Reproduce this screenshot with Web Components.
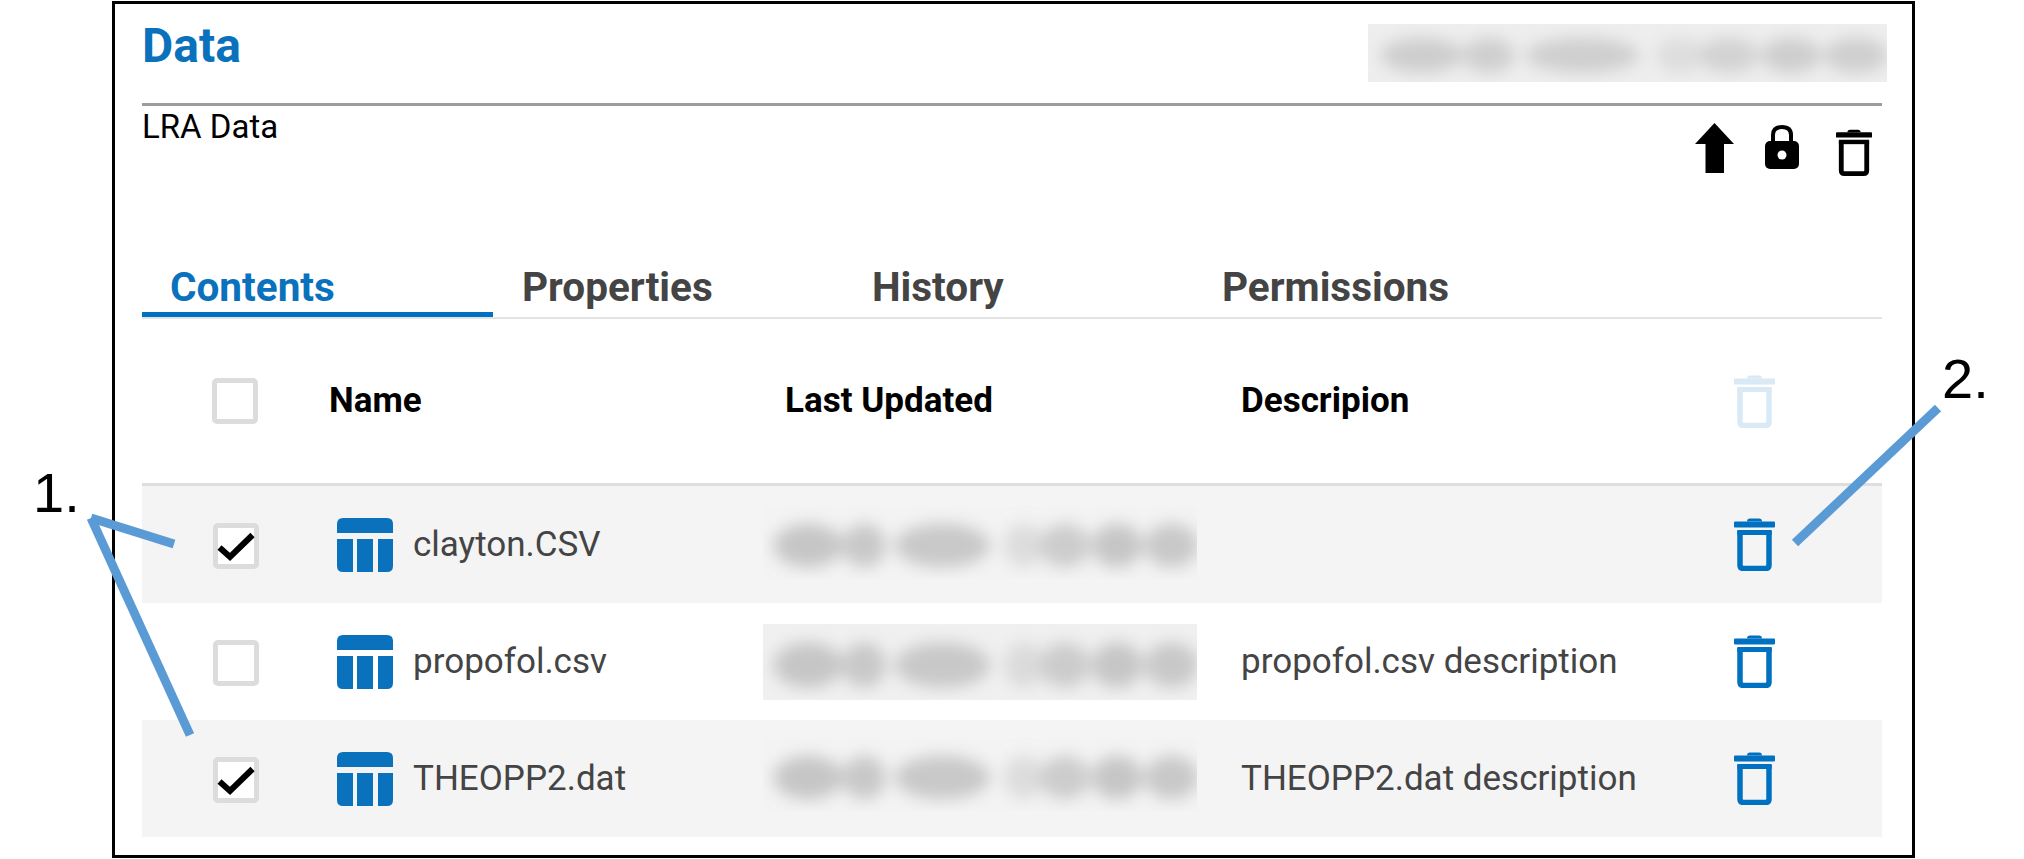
<!DOCTYPE html>
<html><head><meta charset="utf-8"><title>Data</title>
<style>html,body{margin:0;padding:0;background:#fff}</style></head>
<body>
<x-page>
  <x-panel>
    <x-header slot="header" title-text="Data" sub="LRA Data"></x-header>
    <x-tabs slot="tabs">
      <x-tab active>Contents</x-tab><x-tab>Properties</x-tab><x-tab>History</x-tab><x-tab>Permissions</x-tab>
    </x-tabs>
    <x-table-head slot="table"></x-table-head>
    <x-row slot="table" shaded checked blur-h="73" blur-top="20"><span slot="name">clayton.CSV</span></x-row>
    <x-row slot="table" blur-h="76" blur-top="21" blur-box><span slot="name">propofol.csv</span><span slot="desc">propofol.csv description</span></x-row>
    <x-row slot="table" shaded checked blur-h="73" blur-top="18"><span slot="name">THEOPP2.dat</span><span slot="desc">THEOPP2.dat description</span></x-row>
  </x-panel>
</x-page>
<script>
const FONT = 'Roboto, "Liberation Sans", sans-serif';
class Base extends HTMLElement {
  render(html){ const r=this.shadowRoot||this.attachShadow({mode:'open'}); r.innerHTML=html; }
}
customElements.define('x-trash', class extends Base {
  connectedCallback(){
    const c=this.getAttribute('color')||'#0070c0', w=this.getAttribute('w')||41, h=this.getAttribute('h')||53;
    this.render(`<style>:host{display:block;width:${w}px;height:${h}px;line-height:0}</style>
    <svg width="${w}" height="${h}" viewBox="0 0 41 53" fill="none">
      <path d="M13 3.5Q13 0.5 16 0.5H25Q28 0.5 28 3.5Z" fill="${c}"/>
      <rect x="0" y="3.5" width="41" height="6" rx="1" fill="${c}"/>
      <path d="M6 13V47Q6 50.5 9.5 50.5H31.500Q35 50.500 35 47V13" stroke="${c}" stroke-width="5.500"/>
      <rect x="3.300" y="12" width="34.400" height="5" fill="${c}"/>
    </svg>`);
  }
});
customElements.define('x-check', class extends Base {
  connectedCallback(){
    const on=this.hasAttribute('checked');
    this.render(`<style>:host{display:block;width:46px;height:46px;box-sizing:border-box;background:#fff;border:5px solid #dcdcdc;border-radius:5px}
    svg{display:block;margin:-5px}</style>
    ${on?`<svg width="46" height="46" viewBox="0 0 46 46" fill="none"><path d="M6.500 24.500L17 34L39.500 12" stroke="#000" stroke-width="6"/></svg>`:''}`);
  }
});
customElements.define('x-table-icon', class extends Base {
  connectedCallback(){
    this.render(`<style>:host{display:block;width:56px;height:54px;line-height:0}</style>
    <svg width="56" height="54" viewBox="0 0 56 54" fill="#0a72bd">
      <path d="M0 15V6Q0 0 6 0H50Q56 0 56 6V15Z"/>
      <path d="M0 21H16V54H6Q0 54 0 48Z"/>
      <rect x="20" y="21" width="16" height="33"/>
      <path d="M41 21H56V48Q56 54 50 54H41Z"/>
    </svg>`);
  }
});
const BLOBS=[[10.4,8,1],[23.300,5,.95],[41.300,11,.95],[60,4.500,.5],[69.500,5.800,.85],[81.500,5.800,1],[94,6.200,.95]];
customElements.define('x-blur', class extends Base {
  connectedCallback(){
    const w=+this.getAttribute('w'), h=+this.getAttribute('h'), bg=this.getAttribute('bg')||'transparent', col=this.getAttribute('col')||'#c6c6c6';
    const ell=BLOBS.map(([x,rx,o])=>`<ellipse cx="${x*w/100}" cy="${h*.54}" rx="${rx*w/100}" ry="${h*.3}" fill="${col}" opacity="${o}"/>`).join('');
    this.render(`<style>:host{display:block;width:${w}px;height:${h}px;background:${bg};overflow:hidden;line-height:0}</style>
    <svg width="${w}" height="${h}" viewBox="0 0 ${w} ${h}"><defs><filter id="b" x="-30%" y="-50%" width="160%" height="200%"><feGaussianBlur stdDeviation="8"/></filter></defs><g filter="url(#b)">${ell}</g></svg>`);
  }
});
customElements.define('x-header', class extends Base {
  connectedCallback(){
    this.render(`<style>
    :host{display:block;font-family:${FONT}}
    .top{display:flex;justify-content:space-between;height:99px;border-bottom:3px solid #9c9c9c}
    h1{margin:0;padding-top:16px;font:700 48px/52px ${FONT};color:#0a72bd}
    x-blur{margin:20px -5px 0 0}
    .sub{display:flex;justify-content:space-between;height:153px}
    .txt{font:400 33px/36px ${FONT};color:#000;padding-top:3px;height:36px}
    .icons{display:flex;align-items:flex-start;padding:17px 10px 0 0}
    .arrow{margin-right:31px;display:block}.lock{margin-right:37px;display:block}
    x-trash{margin-top:6px}
    </style>
    <div class="top"><h1>${this.getAttribute('title-text')}</h1><x-blur w="519" h="58" bg="#eeeeee" col="#cecece"></x-blur></div>
    <div class="sub"><div class="txt">${this.getAttribute('sub')}</div>
      <div class="icons">
        <svg class="arrow" width="39" height="53" viewBox="0 0 39 53"><path d="M19.500 0L39 21H29V50H10.500V21H0Z" fill="#000"/></svg>
        <svg class="lock" width="34" height="53" viewBox="0 0 34 53"><path d="M8 18V12Q8 4 17 4Q26 4 26 12V18" fill="none" stroke="#000" stroke-width="4"/><rect x="0" y="18" width="34" height="28" rx="5" fill="#000"/><circle cx="17" cy="32" r="4.500" fill="#fff"/></svg>
        <x-trash color="#000" w="36" h="47"></x-trash>
      </div></div>`);
  }
});
customElements.define('x-tabs', class extends Base {
  connectedCallback(){
    this.render(`<style>:host{display:flex;height:58px;border-bottom:2px solid #e4e4e4}</style><slot></slot>`);
  }
});
customElements.define('x-tab', class extends Base {
  connectedCallback(){
    const a=this.hasAttribute('active');
    this.render(`<style>:host{display:block;box-sizing:border-box;width:${a?351:350}px;height:58px;padding-left:${a?28:29}px;font:700 40.500px/57px ${FONT};color:${a?'#0a72bd':'#444'};${a?'border-bottom:5px solid #0070c0;':''}}</style><slot></slot>`);
  }
});
const GRID=`display:grid;grid-template-columns:187px 456px 456px 493px 148px;align-items:center;`;
customElements.define('x-table-head', class extends Base {
  connectedCallback(){
    this.render(`<style>:host{${GRID}height:164px;border-bottom:3px solid #dedede;font:700 35px/40px ${FONT};color:#000}
    x-check{margin-left:70px}</style>
    <x-check></x-check><div>Name</div><div>Last Updated</div><div>Descripion</div><x-trash color="#d9e9f6"></x-trash>`);
  }
});
customElements.define('x-row', class extends Base {
  connectedCallback(){
    const s=this.hasAttribute('shaded');
    this.render(`<style>:host{${GRID}height:117px;background:${s?'#f4f4f4':'#fff'};font:400 35px/40px ${FONT};color:#444}
    x-check{margin:2px 0 0 71px}
    .name{display:flex;align-items:center;gap:20px;margin-left:8px}
    x-blur{align-self:start;margin:${this.getAttribute('blur-top')}px 0 0 -22.5px}
    </style>
    <x-check ${this.hasAttribute('checked')?'checked':''}></x-check>
    <div class="name"><x-table-icon></x-table-icon><slot name="name"></slot></div>
    <x-blur w="434.5" h="${this.getAttribute('blur-h')}" bg="${this.hasAttribute('blur-box')?'#f0f0f0':'#f3f3f3'}"></x-blur>
    <div><slot name="desc"></slot></div>
    <x-trash></x-trash>`);
  }
});
customElements.define('x-panel', class extends Base {
  connectedCallback(){
    this.render(`<style>:host{display:block;box-sizing:border-box;width:1803px;height:857px;margin:1px 0 0 112px;border:3px solid #000;padding:0 30px 0 27px;background:#fff}</style>
    <slot name="header"></slot><slot name="tabs"></slot><slot name="table"></slot>`);
  }
});
customElements.define('x-page', class extends Base {
  connectedCallback(){
    this.render(`<style>:host{display:block;position:relative;width:2024px;height:859px;overflow:hidden}
    .lbl{position:absolute;font:400 56px/64px "Liberation Sans",Arial,sans-serif;color:#000}
    svg{position:absolute;left:0;top:0;pointer-events:none}</style>
    <slot></slot>
    <svg width="2024" height="859" viewBox="0 0 2024 859" fill="none" stroke="#5b9bd5" stroke-width="9">
      <path d="M174 544L91 518"/><path d="M91 518L190 735"/><path d="M1938 408L1795 543"/>
    </svg>
    <div class="lbl" style="left:33px;top:461px">1.</div>
    <div class="lbl" style="left:1942px;top:347px">2.</div>`);
  }
});
</script>
</body></html>
